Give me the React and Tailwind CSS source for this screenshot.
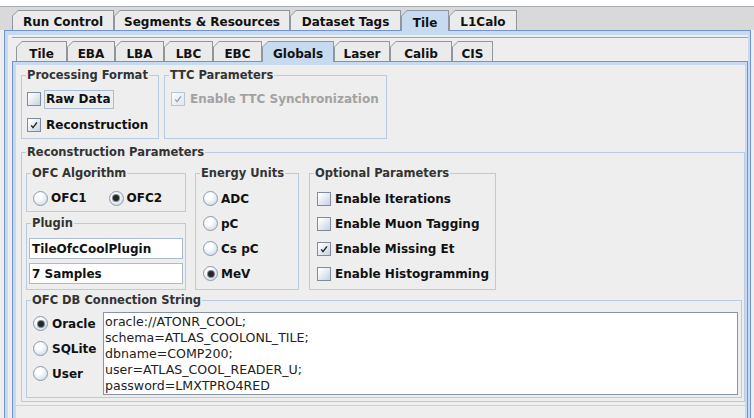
import React from "react";

const outerTabs = [
  { label: "Run Control", w: "w-[102px]" },
  { label: "Segments & Resources", w: "w-[176px]" },
  { label: "Dataset Tags", w: "w-[111px]" },
  { label: "Tile", w: "w-[48px]", selected: true },
  { label: "L1Calo", w: "w-[68px]" },
];

const innerTabs = [
  { label: "Tile", w: "w-[51px]" },
  { label: "EBA", w: "w-[48px]" },
  { label: "LBA", w: "w-[49px]" },
  { label: "LBC", w: "w-[49px]" },
  { label: "EBC", w: "w-[49px]" },
  { label: "Globals", w: "w-[72px]", selected: true },
  { label: "Laser", w: "w-[56px]" },
  { label: "Calib", w: "w-[62px]" },
  { label: "CIS", w: "w-[41px]" },
];

const connection = [
  "oracle://ATONR_COOL;",
  "schema=ATLAS_COOLONL_TILE;",
  "dbname=COMP200;",
  "user=ATLAS_COOL_READER_U;",
  "password=LMXTPRO4RED",
];

// Metal-style tab with a clipped top-left corner
function Tab({ label, w, selected, pad }) {
  return (
    <div
      className={`${w} h-[20px] shrink-0 bg-[#8f969d] px-px pt-px [clip-path:polygon(6px_0,100%_0,100%_100%,0_100%,0_6px)] ${
        selected ? "relative z-10 -mb-px h-[21px]" : ""
      }`}
    >
      <div
        className={`flex h-full items-center justify-center ${pad} font-bold [clip-path:polygon(5px_0,100%_0,100%_100%,0_100%,0_5px)] ${
          selected ? "bg-[#c8daf0]" : "bg-[#ebebeb]"
        }`}
      >
        {label}
      </div>
    </div>
  );
}

function Group({ title, className = "", bodyClass = "", children }) {
  return (
    <fieldset className={`border border-[#b9cbe0] ${className}`}>
      <legend className="ml-[4px] px-px text-[11.5px] leading-[14px] font-bold text-[#333333]">
        {title}
      </legend>
      <div className={bodyClass}>{children}</div>
    </fieldset>
  );
}

function CheckBox({ checked, disabled }) {
  return (
    <span
      className={`flex h-[14px] w-[14px] shrink-0 items-center justify-center border ${
        disabled
          ? "border-[#b7c4d2] bg-[linear-gradient(135deg,#fbfcfd,#dfe6ee)]"
          : "border-[#7e8c9e] bg-[linear-gradient(135deg,#ffffff_10%,#c4d2e2)]"
      }`}
    >
      {checked && (
        <svg width="10" height="10" viewBox="0 0 10 10">
          <path
            d="M2.2 5.4 L4 7.6 L8 2.4"
            fill="none"
            stroke={disabled ? "#9aa3ad" : "#222222"}
            strokeWidth="1.4"
          />
        </svg>
      )}
    </span>
  );
}

function Check({ label, checked, disabled, focused }) {
  return (
    <div className="flex h-[26px] items-center">
      <CheckBox checked={checked} disabled={disabled} />
      <span
        className={`ml-[3px] border py-px pl-px pr-[2px] leading-[15px] font-bold ${
          focused ? "border-[#a7bdd8]" : "border-transparent"
        } ${disabled ? "text-[#a2a2a2]" : ""}`}
      >
        {label}
      </span>
    </div>
  );
}

function OptCheck({ label, checked }) {
  return (
    <div className="flex h-[25px] items-center">
      <CheckBox checked={checked} />
      <span className="ml-[4px] font-bold">{label}</span>
    </div>
  );
}

function Radio({ label, selected, rowClass = "h-[25px]", gap = "ml-[3px]" }) {
  return (
    <div className={`flex items-center ${rowClass}`}>
      <span className="flex h-[15px] w-[15px] shrink-0 items-center justify-center rounded-full border border-[#8c9aac] bg-[radial-gradient(circle_at_38%_32%,#ffffff_0,#ffffff_25%,#c3d1e1_100%)]">
        {selected && (
          <span className="h-[6px] w-[6px] rounded-full bg-[#262626] shadow-[0_0_0_1px_#7d8793]" />
        )}
      </span>
      <span className={`${gap} font-bold`}>{label}</span>
    </div>
  );
}

function Field({ value }) {
  return (
    <div className="flex h-[21px] items-center border border-[#a9bcd3] bg-white pl-[2px] font-bold">
      {value}
    </div>
  );
}

export default function App() {
  return (
    <div className="h-[418px] w-[754px] overflow-hidden bg-[#eeeeee] text-[12px] text-[#111111] [font-family:'DejaVu_Sans',sans-serif]">
      <div className="h-[6px] bg-white" />

      {/* top-level tab strip */}
      <div className="flex h-[24px] items-end border-t border-[#a8aeb4] bg-[#d9d9d9] pl-[12px]">
        {outerTabs.map((t) => (
          <Tab key={t.label} {...t} pad="pt-[3px]" />
        ))}
      </div>

      {/* top-level tab content */}
      <div className="ml-[4px] w-[747px] border-x border-t border-[#7393cf]">
        <div className="h-[388px] border-l-[3px] border-r-[2px] border-t-[4px] border-[#c8daf0] bg-[#eeeeee] pl-[4px] pt-[2px]">
          <div className="h-full border-t border-[#9ea4aa]">
            {/* sub tab strip */}
            <div className="flex h-[23px] items-end pl-[4px]">
              {innerTabs.map((t) => (
                <Tab key={t.label} {...t} pad="pt-[4px]" />
              ))}
            </div>

            {/* Globals panel */}
            <div className="h-full border-x border-t border-[#7393cf]">
              <div className="h-full border-l-[3px] border-r-[2px] border-t-[3px] border-[#c8daf0] bg-[#eeeeee]">
                <div className="border-b border-[#c3d3e5] pb-[3px] pl-[5px] pt-[3px]">
                  <div className="flex gap-[5px]">
                    <Group title="Processing Format" className="w-[138px]" bodyClass="pl-[5px] pt-[4px]">
                      <Check label="Raw Data" focused />
                      <Check label="Reconstruction" checked />
                    </Group>
                    <Group title="TTC Parameters" className="w-[223px]" bodyClass="pl-[6px] pt-[4px]">
                      <Check label="Enable TTC Synchronization" checked disabled />
                    </Group>
                  </div>

                  <Group
                    title="Reconstruction Parameters"
                    className="mt-[6px] w-[724px]"
                    bodyClass="pl-[4px] pt-[7px] pb-[3px]"
                  >
                    <div className="flex items-stretch">
                      <div className="flex w-[160px] flex-col">
                        <Group title="OFC Algorithm" bodyClass="flex gap-[22px] pl-[6px] pt-[6px] pb-px">
                          <Radio label="OFC1" rowClass="h-[24px]" />
                          <Radio label="OFC2" rowClass="h-[24px]" selected />
                        </Group>
                        <Group
                          title="Plugin"
                          className="mt-[4px] flex-1"
                          bodyClass="flex flex-col gap-[4px] px-[2px] pt-[8px] pb-[5px]"
                        >
                          <Field value="TileOfcCoolPlugin" />
                          <Field value="7 Samples" />
                        </Group>
                      </div>

                      <Group title="Energy Units" className="ml-[9px] w-[104px]" bodyClass="pl-[7px] pt-[6px] pb-[3px]">
                        <Radio label="ADC" />
                        <Radio label="pC" />
                        <Radio label="Cs pC" />
                        <Radio label="MeV" selected />
                      </Group>

                      <Group title="Optional Parameters" className="ml-[10px] w-[187px]" bodyClass="pl-[7px] pt-[6px] pb-[3px]">
                        <OptCheck label="Enable Iterations" />
                        <OptCheck label="Enable Muon Tagging" />
                        <OptCheck label="Enable Missing Et" checked />
                        <OptCheck label="Enable Histogramming" />
                      </Group>
                    </div>

                    <Group title="OFC DB Connection String" className="mt-[3px] w-[716px]" bodyClass="flex pb-[2px]">
                      <div className="w-[76px] shrink-0 pl-[6px] pt-[4px]">
                        <Radio label="Oracle" selected gap="ml-[4px]" />
                        <Radio label="SQLite" gap="ml-[4px]" />
                        <Radio label="User" gap="ml-[4px]" />
                      </div>
                      <div className="mt-[5px] h-[83px] w-[635px] border border-[#8795a5] bg-white pl-[1px] pt-px text-[12.6px] font-normal leading-[16px] text-[#222222]">
                        {connection.map((line) => (
                          <div key={line} className="whitespace-pre">
                            {line}
                          </div>
                        ))}
                      </div>
                    </Group>
                  </Group>
                </div>
              </div>
            </div>
          </div>
        </div>
      </div>
    </div>
  );
}
